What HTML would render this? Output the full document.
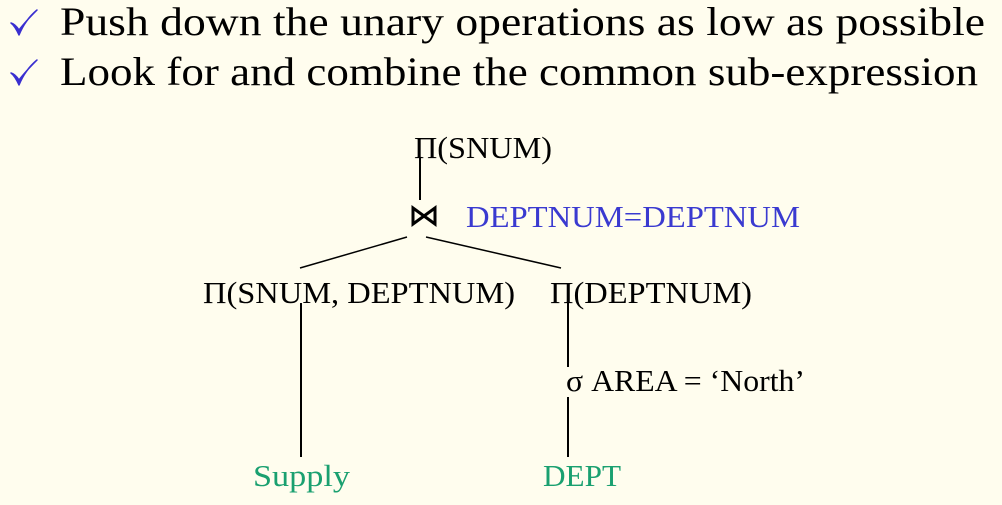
<!DOCTYPE html>
<html><head><style>
html,body{margin:0;padding:0;background:#fffdee;}
svg{display:block}
text{font-family:"Liberation Serif",serif;}
</style></head><body>
<svg width="1002" height="505" viewBox="0 0 1002 505" xmlns="http://www.w3.org/2000/svg">
<rect width="1002" height="505" fill="#fffdee"/>
<path d="M11 23 Q15 26 19 35 Q25 20 37 10 Q25 22 19 30 Q15 24 11 23 Z" fill="#3a2fd0" stroke="#3a2fd0" stroke-width="1.5" stroke-linejoin="round"/>
<path d="M11 73 Q15 76 19 85 Q25 70 37 60 Q25 72 19 80 Q15 74 11 73 Z" fill="#3a2fd0" stroke="#3a2fd0" stroke-width="1.5" stroke-linejoin="round"/>
<text x="60" y="35" font-size="40" fill="#000" textLength="925" lengthAdjust="spacingAndGlyphs">Push down the unary operations as low as possible</text>
<text x="60" y="85" font-size="40" fill="#000" textLength="918" lengthAdjust="spacingAndGlyphs">Look for and combine the common sub-expression</text>

<text x="414" y="158" font-size="31" textLength="138" lengthAdjust="spacingAndGlyphs">Π(SNUM)</text>
<line x1="420" y1="158" x2="420" y2="200" stroke="#000" stroke-width="2"/>
<path d="M413 208 L413 224 L435 208 L435 224 Z" stroke="#000" stroke-width="3" fill="none" stroke-linejoin="miter"/>
<text x="466" y="227" font-size="31" fill="#3a3ad0" textLength="334" lengthAdjust="spacingAndGlyphs">DEPTNUM=DEPTNUM</text>
<line x1="407" y1="237" x2="300" y2="268" stroke="#000" stroke-width="1.5"/>
<line x1="426" y1="237" x2="561" y2="268" stroke="#000" stroke-width="1.5"/>
<text x="203" y="303" font-size="31" textLength="312" lengthAdjust="spacingAndGlyphs">Π(SNUM, DEPTNUM)</text>
<text x="550" y="303" font-size="31" textLength="202" lengthAdjust="spacingAndGlyphs">Π(DEPTNUM)</text>
<line x1="301" y1="303" x2="301" y2="457" stroke="#000" stroke-width="2"/>
<line x1="568" y1="303" x2="568" y2="367" stroke="#000" stroke-width="2"/>
<line x1="568" y1="397" x2="568" y2="457" stroke="#000" stroke-width="2"/>
<text x="566" y="391" font-size="31" textLength="239" lengthAdjust="spacingAndGlyphs">σ AREA = ‘North’</text>
<text x="253" y="486" font-size="31" fill="#1aa070" textLength="97" lengthAdjust="spacingAndGlyphs">Supply</text>
<text x="543" y="486" font-size="31" fill="#1aa070" textLength="78" lengthAdjust="spacingAndGlyphs">DEPT</text>
</svg>
</body></html>
